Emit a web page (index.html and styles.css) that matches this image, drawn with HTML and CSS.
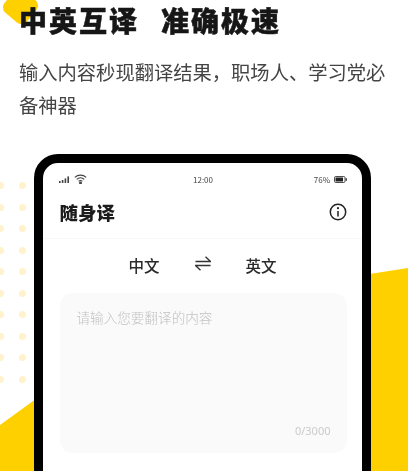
FILE: index.html
```html
<!DOCTYPE html>
<html lang="zh-CN">
<head>
<meta charset="utf-8">
<title>随身译</title>
<link rel="stylesheet" href="styles.css">
</head>
<body>
<main class="stage">
  <div class="blob"></div>
  <svg class="wedges" viewBox="0 0 408 471" aria-hidden="true">
    <polygon points="0,425 40,396 40,471 0,471"/>
    <polygon points="360,275.500 408,268 408,471 360,471"/>
  </svg>
  <div class="dots">
    <i></i><i></i><i></i><i></i><i></i><i></i><i></i><i></i><i></i><i></i>
    <i></i><i></i><i></i><i></i><i></i><i></i><i></i><i></i><i></i><i></i>
  </div>

  <header class="intro">
    <h1 class="headline"><span>中英互译</span><span>准确极速</span></h1>
    <p class="lede">输入内容秒现翻译结果&#65292;职场人、学习党必备神器</p>
  </header>

  <section class="phone">
    <div class="status">
      <div class="status-left">
        <svg class="signal" viewBox="0 0 11 7"><rect x="0" y="5" width="1.6" height="2"/><rect x="2.8" y="4" width="1.6" height="3"/><rect x="5.6" y="2.4" width="1.6" height="4.6"/><rect x="8.4" y="0.4" width="1.6" height="6.6"/></svg>
        <svg class="wifi" viewBox="0 0 13 10"><path d="M.8 3.4C4 .4 9 .4 12.2 3.4M2.7 5.400c2.200-2 5.400-2 7.600 0M4.600 7.300c1.100-.9 2.700-.9 3.800 0"/><circle cx="6.500" cy="9" r=".9"/></svg>
      </div>
      <span class="clock">12:00</span>
      <div class="status-right">
        <span>76%</span>
        <svg class="battery" viewBox="0 0 13 7"><rect x=".5" y=".5" width="10.500" height="6" rx="1.200" class="shell"/><rect x="1.500" y="1.500" width="7.500" height="4"/><rect x="11.600" y="2.200" width="1.200" height="2.600"/></svg>
      </div>
    </div>

    <div class="appbar">
      <span class="appname">随身译</span>
      <svg class="info" viewBox="0 0 18 18"><circle cx="9" cy="9" r="7.700"/><path d="M9 8v5.400"/><circle class="info-dot" cx="9" cy="5.200" r="1.100"/></svg>
    </div>

    <div class="langs">
      <span>中文</span>
      <svg class="swap" viewBox="0 0 16 15"><path d="M.5 5.500h15L10.500 .8M15.500 9.500H.5L5.500 14.200"/></svg>
      <span>英文</span>
    </div>

    <div class="input">
      <span class="placeholder">请输入您要翻译的内容</span>
      <span class="count">0/3000</span>
    </div>
  </section>
</main>
</body>
</html>
```
FILE: styles.css
```css
* { box-sizing: border-box; }

html, body {
  margin: 0;
  background: #fff;
}

.stage {
  position: relative;
  width: 408px;
  height: 471px;
  overflow: hidden;
  background: #fff;
  font-family: "Noto Sans CJK SC", "Noto Sans", sans-serif;
  color: #222;
  filter: blur(0.4px);
}

.blob {
  position: absolute;
  left: 6px;
  top: -8px;
  width: 29px;
  height: 29px;
  border-radius: 7px;
  background: #ffd000;
  transform: rotate(40deg);
}

.wedges {
  position: absolute;
  inset: 0;
  width: 408px;
  height: 471px;
  fill: #ffd000;
}

.dots {
  position: absolute;
  left: -3px;
  top: 182px;
  display: grid;
  grid-template-columns: repeat(2, 7px);
  grid-auto-rows: 7px;
  column-gap: 15px;
  row-gap: 14.500px;
}

.dots i {
  border-radius: 50%;
  background: #fff2cc;
}

.intro {
  position: relative;
  padding: 0 0 0 19px;
  height: 154px;
}

.headline {
  margin: 0;
  display: flex;
  gap: 22px;
  font-size: 28px;
  letter-spacing: 2px;
  line-height: 41px;
  font-weight: 900;
  color: #161616;
  -webkit-text-stroke: 0.5px #161616;
}

.lede {
  margin: 15px 0 0;
  width: 372px;
  font-size: 19.300px;
  line-height: 33px;
  font-weight: 400;
  color: #444;
}

.phone {
  position: relative;
  width: 337px;
  height: 340px;
  margin-left: 34px;
  border: 9.500px solid #000;
  border-radius: 24px;
  background: #fff;
  overflow: hidden;
}

.status {
  display: grid;
  grid-template-columns: 1fr auto 1fr;
  align-items: center;
  height: 14px;
  margin-top: 9px;
  padding: 0 15px 0 16px;
  font-size: 8px;
  color: #444;
}

.status-left, .status-right {
  display: flex;
  align-items: center;
  gap: 4px;
}

.status-right { justify-content: flex-end; }

.signal { width: 11px; height: 7px; fill: #444; }

.wifi {
  width: 13px;
  height: 10px;
  fill: #444;
  stroke: #444;
  stroke-width: 1.100;
}

.wifi path { fill: none; }

.battery { width: 13px; height: 7px; fill: #222; }

.battery .shell { fill: none; stroke: #222; stroke-width: .8; }

.appbar {
  display: flex;
  align-items: center;
  justify-content: space-between;
  height: 53px;
  padding: 0 15px 0 16.500px;
  border-bottom: 1px solid #f7f7f7;
}

.appname {
  font-size: 18.500px;
  font-weight: 900;
  color: #1c1c1c;
}

.info {
  width: 18px;
  height: 18px;
  fill: none;
  stroke: #222;
  stroke-width: 1.500;
}

.info-dot { fill: #222; stroke: none; }

.langs {
  display: flex;
  justify-content: center;
  align-items: center;
  gap: 35px;
  height: 52px;
  margin-bottom: 2px;
  font-size: 15.500px;
  font-weight: 500;
  color: #2a2a2a;
}

.swap {
  width: 16px;
  height: 15px;
  margin-bottom: 3px;
  fill: none;
  stroke: #333;
  stroke-width: 1.400;
}

.input {
  display: flex;
  flex-direction: column;
  justify-content: space-between;
  width: 287px;
  height: 160px;
  margin-left: 16.500px;
  padding: 14px 16px 14px 17px;
  border-radius: 13px;
  background: #fafafa;
}

.placeholder {
  font-size: 13.600px;
  line-height: 20px;
  font-weight: 300;
  color: #c2c2c2;
}

.count {
  align-self: flex-end;
  font-family: "Noto Sans", sans-serif;
  font-size: 11px;
  line-height: 16px;
  color: #cbcbcb;
}
```
